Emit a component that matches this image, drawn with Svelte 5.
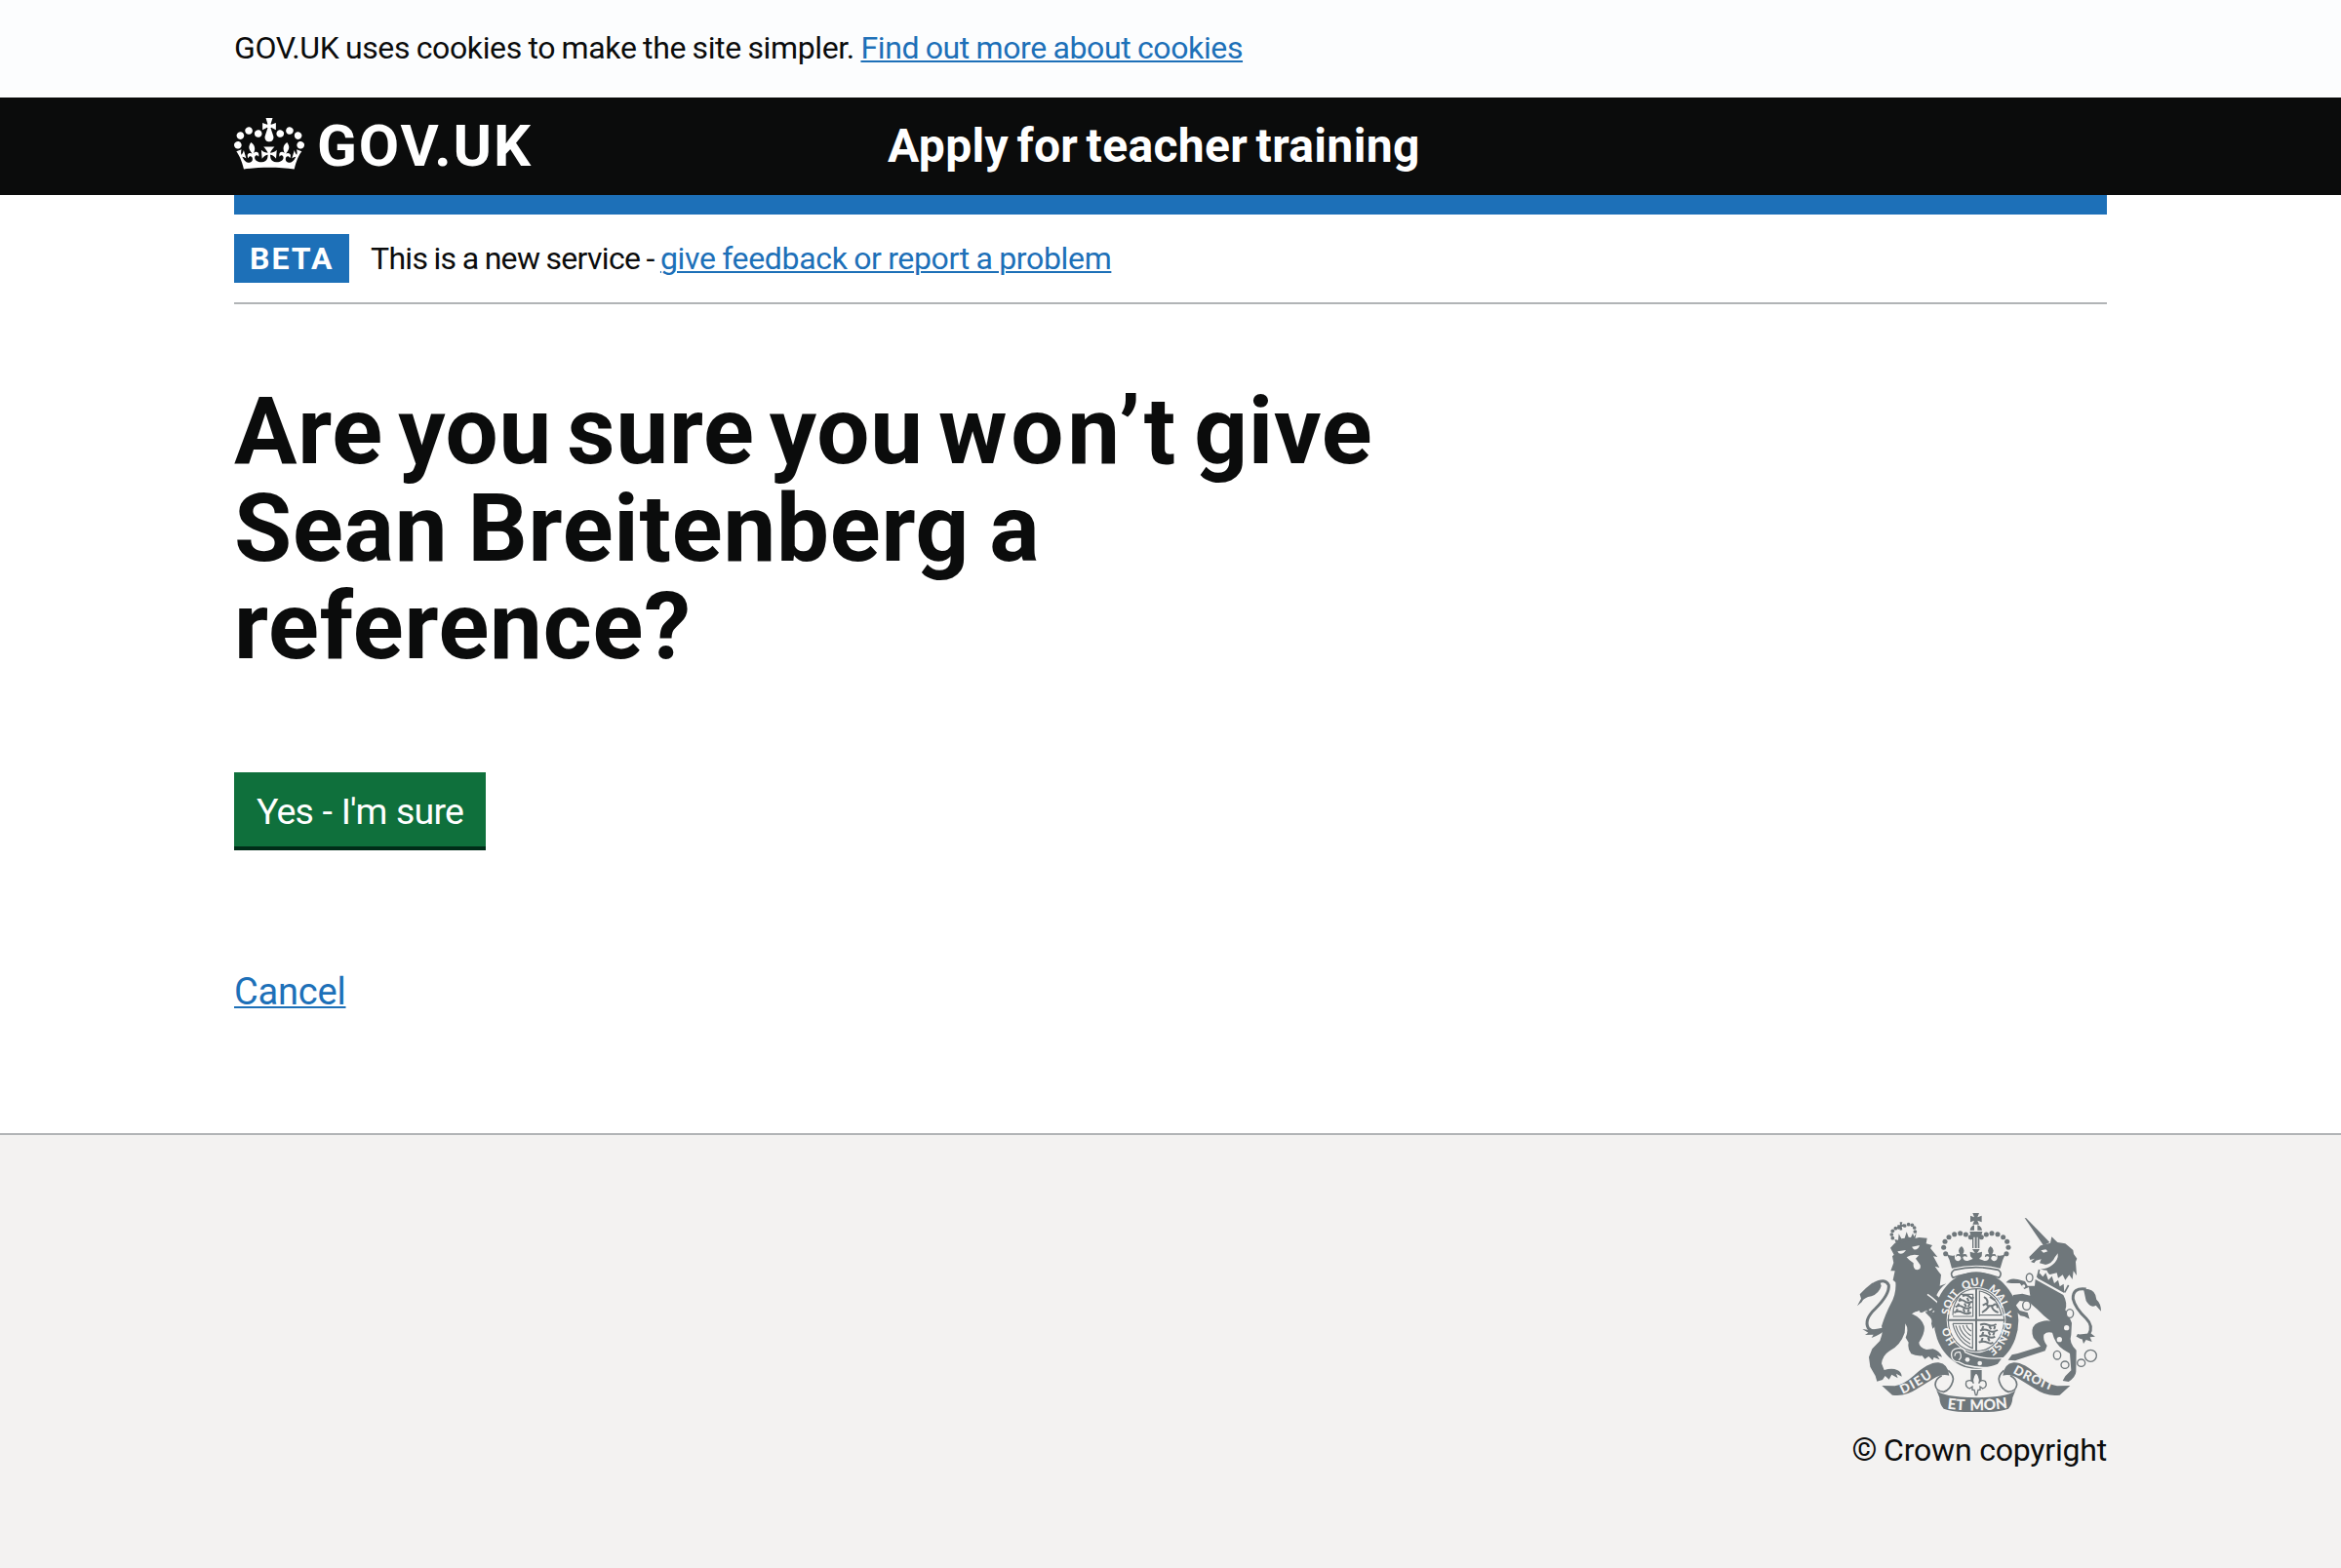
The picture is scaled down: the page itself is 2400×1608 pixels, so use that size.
<script>
  const arch = [
    [344, 197], [338, 178], [342, 160], [354, 146], [371, 137], [389, 134], [406, 138], [421, 146],
  ];
  const pearls = [...arch, ...arch.map(([x, y]) => [875 - x, y])];
  const lionPearls = [[181, 149], [178, 138], [181, 127], [190, 119], [200, 117], [218, 111], [230, 107], [241, 109], [248, 117], [250, 129]];
  const links = [[602, 271, 10, 13], [593, 356, 12, 14], [726, 381, 11, 13], [687, 509, 11, 13], [711, 539, 12, 11], [761, 533, 12, 11], [790, 511, 18, 18]];
</script>

<div class="cookies">
  <p class="container small">GOV.UK uses cookies to make the site simpler. <a href="#cookies">Find out more about cookies</a></p>
</div>

<header>
  <div class="container bar">
    <a class="logo" href="#home">
      <svg class="crown" viewBox="0 0 132 97" aria-hidden="true">
        <path d="M25 30.2c3.5 1.5 7.7-.2 9.1-3.7 1.5-3.6-.2-7.8-3.9-9.2-3.6-1.4-7.6.3-9.1 3.9-1.4 3.5.3 7.5 3.9 9zM9 39.5c3.6 1.5 7.8-.2 9.2-3.7 1.5-3.6-.2-7.8-3.9-9.1-3.6-1.5-7.6.2-9.1 3.8-1.4 3.5.3 7.5 3.8 9zM4.4 57.2c3.5 1.5 7.7-.2 9.1-3.8 1.5-3.6-.2-7.7-3.9-9.1-3.5-1.5-7.6.3-9.1 3.8-1.4 3.5.3 7.6 3.9 9.1zm38.3-21.4c3.5 1.5 7.7-.2 9.1-3.8 1.5-3.6-.2-7.7-3.9-9.1-3.6-1.5-7.6.3-9.1 3.8-1.3 3.6.4 7.7 3.9 9.1zm64.4-5.6c-3.6 1.5-7.8-.2-9.1-3.7-1.5-3.6.2-7.8 3.8-9.2 3.6-1.4 7.7.3 9.2 3.9 1.3 3.5-.4 7.5-3.9 9zm15.9 9.3c-3.6 1.5-7.7-.2-9.1-3.7-1.5-3.6.2-7.8 3.7-9.1 3.6-1.5 7.7.2 9.2 3.8 1.5 3.5-.3 7.5-3.8 9zm4.7 17.7c-3.6 1.5-7.8-.2-9.2-3.8-1.5-3.6.2-7.7 3.9-9.1 3.6-1.5 7.7.3 9.2 3.8 1.3 3.5-.4 7.6-3.9 9.1zM89.3 35.8c-3.6 1.5-7.8-.2-9.2-3.8-1.4-3.6.2-7.7 3.9-9.1 3.6-1.5 7.7.3 9.2 3.8 1.4 3.6-.3 7.7-3.9 9.1zM69.7 17.7l8.9 4.7V9.3l-8.9 2.8c-.2-.3-.5-.6-.9-.9L72.4 0H59.6l3.5 11.2c-.3.3-.6.5-.9.9l-8.8-2.8v13.1l8.8-4.7c.3.3.6.7.9.9l-5 15.4v.1c-.2.8-.4 1.6-.4 2.4 0 4.1 3.1 7.5 7 8.1h.2c.3 0 .7.1 1 .1.4 0 .7 0 1-.1h.2c4-.6 7.1-4.1 7.1-8.1 0-.8-.1-1.7-.4-2.4V34l-5.1-15.4c.4-.2.7-.6 1-.9zM66 92.8c16.9 0 32.8 1.1 47.1 3.2 4-16.9 8.9-26.7 14-33.5l-9.6-3.4c1 4.9 1.1 7.2 0 10.2-1.5-1.4-3-4.3-4.2-8.7L108.6 76c2.8-2 5-3.2 7.5-3.3-4.4 9.4-10 11.9-13.6 11.2-4.3-.8-6.3-4.6-5.6-7.9 1-4.7 5.7-5.9 8-.5 4.3-8.7-3-11.4-7.6-8.8 7.1-7.2 7.9-13.5 2.1-21.1-8 6.1-8.1 12.3-4.5 20.8-4.7-5.4-12.1-2.5-9.5 6.2 3.4-5.2 7.9-2 7.2 3.1-.6 4.3-6.4 7.8-13.5 7.2-10.3-.9-10.9-8-11.2-13.8 2.5-.5 7.1 1.8 11 7.3L80.2 60c-4.1 4.4-8 5.3-12.3 5.4 1.4-4.4 8-11.6 8-11.6H55.5s6.4 7.2 7.9 11.6c-4.2-.1-8-1-12.3-5.4l1.4 16.4c3.9-5.5 8.5-7.7 10.9-7.3-.3 5.8-.9 12.8-11.1 13.8-7.2.6-12.9-2.9-13.5-7.2-.7-5 3.8-8.3 7.1-3.1 2.7-8.7-4.6-11.6-9.4-6.2 3.7-8.5 3.6-14.7-4.6-20.8-5.8 7.6-5 13.9 2.2 21.1-4.7-2.6-11.9.1-7.7 8.8 2.3-5.5 7.1-4.2 8.1.5.7 3.3-1.3 7.1-5.7 7.9-3.5.7-9-1.8-13.5-11.2 2.5.1 4.7 1.3 7.5 3.3l-4.7-15.4c-1.2 4.4-2.7 7.2-4.3 8.7-1.1-3-.9-5.3 0-10.2l-9.5 3.4c5 6.9 9.9 16.7 14 33.5 14.8-2.1 30.8-3.2 47.7-3.2z" />
      </svg>
      <span class="wordmark">GOV.UK</span>
    </a>
    <a class="service" href="#service">Apply for teacher training</a>
  </div>
</header>

<div class="container">
  <div class="stripe"></div>
  <div class="phase">
    <strong class="tag">BETA</strong>
    <span class="note">This is a new service - <a href="#feedback">give feedback or report a problem</a></span>
  </div>
  <main>
    <h1><span class="l1">Are you sure you <span class="wont">won’t</span> give</span><br /><span class="l2">Sean Breitenberg a</span><br />reference?</h1>
    <button>Yes - I'm sure</button>
    <p class="cancel"><a href="#cancel">Cancel</a></p>
  </main>
</div>

<footer>
  <div class="container foot">
    <div class="rights">
      <svg class="crest" viewBox="72 72 750 612" aria-hidden="true">
        <defs>
          <path id="garter" d="M438 507A98 107 0 0 1 438 295A98 107 0 0 1 438 507" />
          <path id="dieu" d="M212 629Q258 609 322 564" />
          <path id="droit" d="M550 563Q600 592 682 624" />
          <path id="etmon" d="M340 673Q437 686 540 671" />
        </defs>

        <!-- lion -->
        <path d="M174 179L188 164L262 147L287 149L284 166L303 171L297 180L319 207L306 205L325 240L311 236Q322 252 330 262L326 296L346 289Q326 303 316 325Q340 345 348 375Q352 400 343 420Q335 428 325 424L322 432L312 420L304 428L300 412Q304 400 296 392L282 378L284 372L270 379Q255 372 240 382Q270 395 278 420Q282 440 262 470Q262 485 285 492L305 490Q325 495 333 515L318 510L326 523L308 516L304 525L292 513L280 521L272 511Q250 512 238 505Q226 490 230 470L221 455Q232 430 220 412L218 440Q205 480 170 497Q150 510 147 535L155 555Q180 548 195 555Q208 560 209 575L192 566L197 580L178 569L170 584L158 573L150 585L133 590L128 573L112 545L108 515L118 490L142 465Q154 435 147 420Q160 380 175 352Q193 320 190 285L182 278L188 250L175 250L184 225L180 205L185 200Z" />
        <path class="cut" d="M196 190L222 186Q214 200 200 196ZM240 176L264 171Q260 186 246 184ZM224 208Q240 196 262 202L252 212L266 232Q270 246 256 247Q243 246 245 226L232 216Z" />
        <path class="line thin light" d="M288 322Q318 342 334 366M246 381L264 374M284 374L300 368L302 380L310 374" />
        <path d="M284 372L292 364L294 374L304 366L304 378L320 372L318 395Z" />
        <path d="M72 358L84 335L80 322Q100 300 118 287L142 283L146 296Q140 318 116 328Q92 332 86 346Z" />
        <path class="line" d="M124 290Q158 270 169 294Q172 322 128 366Q92 400 106 426Q126 448 160 422" />
        <path d="M88 429L110 432L146 426L158 430Q146 446 116 456L122 446L96 447L106 440Z" />
        {#each lionPearls as [x, y]}<circle cx={x} cy={y} r="5.6" />{/each}
        <path d="M203 100L211 100L209 108L216 106L217 114L209 114L211 124L203 125L204 116L196 117L196 109L204 109ZM187 153L192 167L250 153L254 133L247 145L243 134L237 147L230 146L224 130L218 149L208 151L200 136L198 155Z" />

        <!-- crown -->
        <path d="M427 72H447L442 85L455 80V100L442 95L447 107H427L432 95L420 100V80L432 85ZM419 125A19 19 0 0 1 432 109V125ZM442 109A19 19 0 0 1 456 125H442ZM418 129H457Q455 142 448 146V180H443V146H440V180H434V146H430V180H426V146Q419 140 418 129Z" />
        {#each pearls as [x, y]}<circle cx={x} cy={y} r="7.6" />{/each}
        <path d="M346 196Q360 207 372 202Q370 222 385 219Q396 214 388 205Q380 201 376 208Q374 194 388 199Q378 184 393 174Q406 184 397 199Q412 195 410 208Q402 201 397 208Q398 220 412 219L428 213L420 205L419 191L434 195L426 183H449L441 195L456 191L455 205L447 213L463 219Q477 220 478 208Q473 201 465 208Q463 195 478 199Q469 184 482 174Q497 184 487 199Q501 194 499 208Q495 201 487 205Q479 214 490 219Q505 222 503 202Q515 207 529 196Q518 216 512 242Q437 224 363 242Q358 216 346 196Z" />
        <path class="line thin" d="M370 247Q437 231 506 247Q520 258 508 271Q437 244 367 271Q355 258 370 247Z" />

        <!-- garter and shield -->
        <ellipse cx="438" cy="402" rx="130" ry="149" />
        <ellipse class="cut" cx="438" cy="401" rx="91" ry="101" />
        <ellipse class="line fine" cx="438" cy="401" rx="86" ry="96" />
        <path d="M435 305h6v192h-6zM350 398h176v6H350z" />
        <path class="line fine" d="M366 386Q366 350 390 322H428V390H366M448 390V312Q500 320 516 386H448M366 412H427V488Q380 470 366 412M375 418Q385 455 420 475M386 418Q392 445 420 462M397 417Q400 435 422 450M408 416Q410 428 423 435" />
        <path class="line beast" d="M396 328q12-8 22 2t10 0M384 343q10-7 20 1t22 0M374 361q12-8 22 0t28 0M370 378q14-7 26 0t26 0M390 334l-5 9M410 333l5 10M385 350l-6 10M402 350l5 10M418 350l-4 10M380 367l-3 10M398 367l5 10M416 367l-4 10M462 330q14 8 10 20t18 6q12-10 14 8M456 378q14-8 24-22M470 350l-12 6M486 358q2 14 20 20M480 330l16 10M450 416q12-6 24 0t26-2M450 434q14-7 26 0t28-2M448 452q14-7 26 0t22 0M446 470q14-6 26 0t18 0M460 420l-4 10M478 420l6 10M496 420l-3 10M460 438l-4 10M476 438l5 10M494 438l-4 10M458 456l-4 10M474 456l5 10" />
        <g class="motto">
          <text><textPath href="#garter" startOffset="12.5%">HO</textPath></text>
          <text><textPath href="#garter" startOffset="27.5%">SOIT</textPath></text>
          <text><textPath href="#garter" startOffset="43%">QUI</textPath></text>
          <text><textPath href="#garter" startOffset="56.5%">MAL</textPath></text>
          <text><textPath href="#garter" startOffset="70.5%">Y</textPath></text>
          <text><textPath href="#garter" startOffset="76%">PENSE</textPath></text>
        </g>
        <path class="buckle" d="M362 510Q360 490 382 488Q402 486 404 500Q450 524 520 518L505 538Q470 556 405 540Q392 534 384 530Q364 530 362 510Z" />
        <path class="line light fine" d="M372 512Q372 498 388 500Q396 516 384 524" />
        <circle class="cut" cx="411" cy="523" r="7" /><circle class="cut" cx="449" cy="534" r="7" />

        <!-- unicorn -->
        <path d="M587 87L592 88L664 162L645 172Z" />
        <path d="M601 207L636 172L666 164L670 145L688 162L712 166L722 174L736 186L738 198L748 212L744 222L747 264L737 250L734 276L724 262L712 278L704 262L690 272L686 256L662 262L655 248L634 246Q644 238 652 231L633 226L638 214L622 218L616 226L606 222L618 212L604 216Z" />
        <path class="cut" d="M637 187L652 184L658 190L645 194ZM689 196Q692 216 672 232Q655 246 634 244L648 232Q672 228 680 208Z" />
        <path class="cut" d="M634 242L722 296L708 320L622 272Z" />
        <path class="line thin" d="M632 246L626 270M722 294L710 316" />
        <path d="M626 272L632 256L643 268L652 256L660 278L671 266L678 288L690 278L695 298L707 290L709 318Z" />
        <path d="M620 276L706 324Q720 350 712 370Q726 392 732 410L730 446Q722 470 746 494L745 560Q744 576 722 591L704 588L712 574L730 556L726 504L706 492Q680 474 672 440Q655 436 646 446Q642 462 656 480L650 496L576 520L558 526L536 524L548 508L566 504L636 482L614 456Q604 428 620 414Q645 400 666 404Q645 388 626 368L600 346L572 342L560 356L572 372L596 378L602 398L586 390L574 388L552 366L544 342L552 324L580 320L604 326L600 300L586 306L572 288L546 288L530 286Q540 270 566 276L588 282L596 296L618 296Z" />
        <circle class="cut" cx="716" cy="425" r="8" /><circle class="cut" cx="694" cy="461" r="8" /><circle class="cut" cx="584" cy="297" r="5" />
        {#each links as [x, y, rx, ry]}<ellipse class="link" cx={x} cy={y} {rx} {ry} />{/each}
        <path class="line" d="M776 306Q734 300 736 336Q742 364 776 396Q800 420 784 446Q770 464 748 448" />
        <path d="M822 374L806 356Q790 366 776 342L768 306L782 306Q806 310 808 338Q822 350 822 374ZM748 446L790 442L804 452L788 454L794 468L776 462L768 474L764 460Z" />

        <!-- ribbon -->
        {#each ['', 'matrix(-1 0 0 1 875 0)'] as flip}
          <g transform={flip}>
            <path d="M148 603L188 604Q214 600 246 572Q292 530 322 532Q352 536 355 572Q330 566 306 582L256 613Q220 638 180 632Z" />
            <path class="line thin" d="M352 556Q372 574 366 590Q358 616 338 622Q314 620 312 600Q312 582 332 572" />
            <path d="M315 615Q330 638 438 640V684Q370 686 338 674Q326 662 325 640Z" />
          </g>
        {/each}
        <g class="scroll">
          <text textLength="106"><textPath href="#dieu">DIEU</textPath></text>
          <text textLength="132"><textPath href="#droit">DROIT</textPath></text>
          <text class="big"><textPath href="#etmon" startOffset="9">ET MON</textPath></text>
        </g>
        <path d="M421 555H455V590H421Z" />
        <path class="fleur" d="M438 562Q454 580 446 596Q452 582 466 590Q474 606 458 612L450 606V616H444L440 632H436L432 616H426V606L418 612Q402 606 408 590Q424 582 430 596Q422 580 438 562Z" />
      </svg>
      <span class="copy"><span class="sign">©</span> Crown copyright</span>
    </div>
  </div>
</footer>

<style>
  :global(body) {
    margin: 0;
    background: #fff;
  }
  :global(#app) {
    min-height: 1608px;
    display: flex;
    flex-direction: column;
    color: #0b0c0c;
    font-family: Roboto, "Noto Sans", sans-serif;
    font-size: 32px;
    line-height: 50px;
  }
  .container {
    width: 1920px;
    margin: 0 auto;
  }
  a {
    color: #1d70b8;
    text-decoration-thickness: 2px;
    text-underline-offset: 2px;
  }
  .cookies {
    height: 100px;
    box-sizing: border-box;
    padding-bottom: 2px;
    display: flex;
    align-items: center;
    background: #fcfdfe;
  }
  .small {
    letter-spacing: -0.37px;
    word-spacing: -1px;
  }
  header {
    background: #0b0c0c;
  }
  .bar {
    height: 100px;
    display: flex;
    align-items: center;
  }
  .bar a {
    color: #fff;
    text-decoration: none;
  }
  .logo {
    width: 670px;
    display: flex;
    align-items: center;
    gap: 13px;
  }
  .crown {
    width: 72px;
    height: 53px;
    margin-bottom: 5px;
    fill: #fff;
  }
  .wordmark {
    font-size: 60px;
    font-weight: 700;
    letter-spacing: 1.9px;
  }
  .service {
    font-size: 48px;
    font-weight: 700;
    letter-spacing: 0.35px;
    word-spacing: -4px;
  }
  .stripe {
    height: 20px;
    background: #1d70b8;
  }
  .phase {
    display: flex;
    padding: 20px 0;
    gap: 22px;
    border-bottom: 2px solid #b1b4b6;
  }
  .tag {
    width: 118px;
    box-sizing: border-box;
    padding-left: 16px;
    background: #1d70b8;
    color: #fff;
    letter-spacing: 2px;
  }
  .note {
    letter-spacing: -0.69px;
    word-spacing: -1px;
  }
  .note a {
    letter-spacing: -0.34px;
  }
  main {
    padding-top: 80px;
  }
  h1 {
    margin: 0 0 100px;
    font-size: 96px;
    line-height: 100px;
    font-weight: 700;
    letter-spacing: 0.8px;
  }
  .l1 {
    word-spacing: -9.5px;
  }
  .wont {
    letter-spacing: 3.8px;
  }
  .l2 {
    word-spacing: -4.5px;
  }
  button {
    display: block;
    width: 258px;
    height: 76px;
    padding: 3px 0 0;
    border: 0;
    background: #0f703c;
    box-shadow: 0 4px 0 #002d18;
    color: #fff;
    font: inherit;
    font-size: 37.5px;
    letter-spacing: -0.8px;
    word-spacing: 1px;
  }
  p {
    margin: 0;
  }
  .cancel {
    margin-top: 124px;
    font-size: 38px;
    letter-spacing: -0.2px;
  }
  footer {
    flex: 1;
    margin-top: 120px;
    border-top: 2px solid #b1b4b6;
    background: #f3f2f1;
  }
  .foot {
    display: flex;
    justify-content: flex-end;
    padding-top: 80px;
  }
  .rights {
    display: flex;
    flex-direction: column;
    align-items: flex-end;
  }
  .crest {
    width: 250px;
    height: 204px;
    margin-right: 6px;
    fill: #6f777b;
  }
  .copy {
    margin-top: 14px;
    letter-spacing: -0.2px;
  }
  .sign {
    font-size: 33px;
    line-height: 1;
    letter-spacing: -1px;
  }
  .cut {
    fill: #f3f2f1;
  }
  .line {
    fill: none;
    stroke: #6f777b;
    stroke-width: 9;
  }
  .thin {
    stroke-width: 5;
  }
  .fine {
    stroke-width: 3.5;
  }
  .beast {
    stroke-width: 6;
  }
  .light {
    stroke: #f3f2f1;
  }
  .link {
    fill: #f3f2f1;
    stroke: #6f777b;
    stroke-width: 4;
  }
  .buckle {
    stroke: #f3f2f1;
    stroke-width: 4;
  }
  .fleur {
    fill: #f3f2f1;
    stroke: #6f777b;
    stroke-width: 4;
  }
  .motto,
  .scroll {
    fill: #f3f2f1;
    font-family: Lato, sans-serif;
    font-weight: 900;
    font-size: 33px;
  }
  .scroll {
    font-size: 39px;
  }
  .big {
    font-size: 46px;
    word-spacing: 6px;
  }
</style>
